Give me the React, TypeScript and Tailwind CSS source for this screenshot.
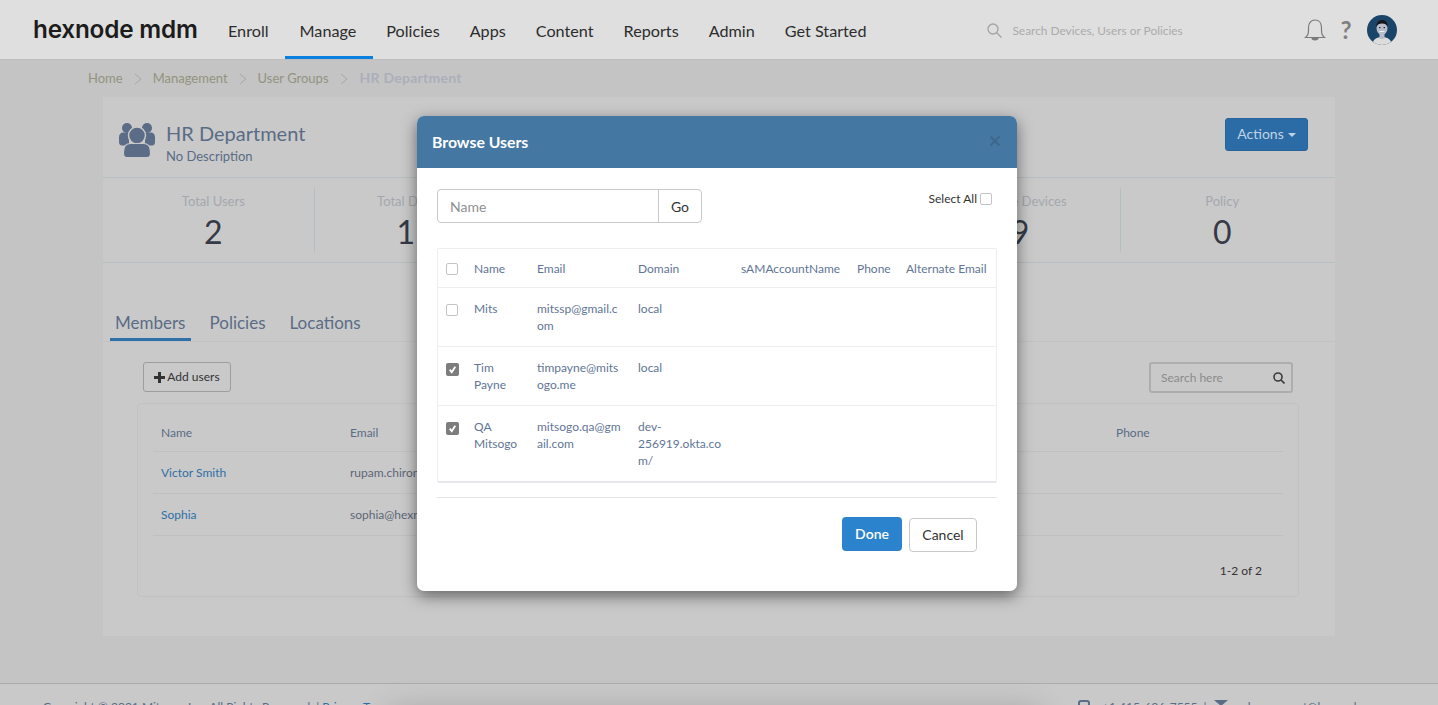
import React from "react";

const navItems = ["Enroll", "Manage", "Policies", "Apps", "Content", "Reports", "Admin", "Get Started"];
const stats = [
  ["Total Users", "2"],
  ["Total Devices", "11"],
  ["Enrolled Devices", "9"],
  ["Managed Devices", "9"],
  ["Inactive Devices", "9"],
  ["Policy", "0"],
];
const modalRows = [
  { name: "Mits", email: "mitssp@gmail.com", domain: "local", checked: false },
  { name: "Tim Payne", email: "timpayne@mitsogo.me", domain: "local", checked: true },
  { name: "QA Mitsogo", email: "mitsogo.qa@gmail.com", domain: "dev-256919.okta.com/", checked: true },
];

function Check({ checked = false }: { checked?: boolean }) {
  return checked ? (
    <span className="flex h-[13px] w-[13px] items-center justify-center rounded-[2px] bg-[#7d7d7d]">
      <svg viewBox="0 0 12 12" className="h-[11px] w-[11px]" fill="none" stroke="#ffffff" strokeWidth="2">
        <path d="M3 6.2 5.2 9 9 3" />
      </svg>
    </span>
  ) : (
    <span className="block h-[12px] w-[12px] rounded-[2px] border border-[#c4c4c4] bg-white" />
  );
}

function UsersIcon() {
  return (
    <svg width="38" height="36" viewBox="0 0 38 36" className="shrink-0">
      <g fill="#5a6c86">
        <circle cx="9" cy="6" r="5" />
        <circle cx="29" cy="6" r="5" />
        <path d="M1 15c0-3 2-4.500 4-4.500h6v13H4c-2 0-3-1.500-3-3.500z" />
        <path d="M37 15c0-3-2-4.500-4-4.500h-6v13h7c2 0 3-1.500 3-3.500z" />
      </g>
      <circle cx="19" cy="13.500" r="8.500" fill="#5a6c86" stroke="#c9c9c9" strokeWidth="1.500" />
      <path d="M5.500 30c0-6 3-8.500 7-8.500h13c4 0 7 2.500 7 8.500v2c0 2-1.500 3.500-3.500 3.500H9c-2 0-3.500-1.500-3.500-3.500z" fill="#5a6c86" stroke="#c9c9c9" strokeWidth="1.200" />
    </svg>
  );
}

function Avatar() {
  return (
    <svg width="30" height="30" viewBox="0 0 30 30" className="shrink-0">
      <clipPath id="av"><circle cx="15" cy="15" r="15" /></clipPath>
      <g clipPath="url(#av)">
        <rect width="30" height="30" fill="#1b4568" />
        <path d="M5 30c1-6 5-8 10-8s9 2 10 8z" fill="#dcdcdc" />
        <rect x="12.500" y="18" width="5" height="6" fill="#b9bcc9" />
        <ellipse cx="15" cy="13" rx="5.500" ry="7" fill="#b9bcc9" />
        <path d="M9.500 12c-.500-4 2-7 5.500-7s6 2.500 5.500 7c-1-2.500-2.500-3.500-5.500-3.500S10.500 9.500 9.500 12z" fill="#15171c" />
        <rect x="12" y="12" width="1.500" height="1.200" fill="#2b2b33" />
        <rect x="16.500" y="12" width="1.500" height="1.200" fill="#2b2b33" />
        <path d="M12.500 16.500h5" stroke="#f3f3f3" strokeWidth="1" />
      </g>
    </svg>
  );
}

function Chevron() {
  return (
    <svg width="8" height="12" viewBox="0 0 8 12" fill="none" stroke="#a8a8a0" strokeWidth="1" className="mx-[11px]">
      <path d="m1 1 6 5-6 5" />
    </svg>
  );
}

export default function App() {
  return (
    <div className="relative flex h-[705px] w-[1438px] flex-col overflow-hidden bg-[#c4c4c4] font-[Lato,sans-serif] text-[#333333]">
      {/* top bar */}
      <header className="flex h-[60px] shrink-0 items-stretch border-b border-[#bdbdbd] bg-[#dfdfdf]">
        <div className="flex w-[213px] shrink-0 items-center pl-[33px] font-[Inter,sans-serif] text-[24.300px] font-semibold tracking-[-0.2px] text-[#1c1c1c]">
          hexnode mdm
        </div>
        <nav className="flex items-stretch">
          {navItems.map((item) => (
            <div
              key={item}
              className={
                "flex items-center pt-[6px] text-[16.200px] text-[#2c2c2c] " +
                (item === "Manage"
                  ? "-mr-[2px] ml-[1px] border-b-[3px] border-[#0a7fe0] pl-[15px] pr-[17px]"
                  : "border-b-[3px] border-transparent px-[15px]")
              }
            >
              {item}
            </div>
          ))}
        </nav>
        <div className="ml-[106px] flex w-[300px] items-center gap-[10px] pt-[2px]">
          <svg width="15" height="15" viewBox="0 0 15 15" fill="none" stroke="#a3a3a3" strokeWidth="1.300">
            <circle cx="6" cy="6" r="5" />
            <path d="m9.700 9.700 4.800 4.800" />
          </svg>
          <input
            readOnly
            placeholder="Search Devices, Users or Policies"
            className="w-[220px] bg-transparent text-[11.900px] outline-none placeholder:text-[#ababab]"
          />
        </div>
        <div className="ml-[17px] flex items-center">
          <svg width="22" height="24" viewBox="0 0 22 24" fill="none" stroke="#7b7b7b" strokeWidth="1.200">
            <path d="M1.500 19.500c2-1.500 3-3 3-7V9.500C4.500 5 7 2 11 2s6.500 3 6.500 7.500v3c0 4 1 5.500 3 7z" />
            <path d="M8 20c0 2.500 6 2.500 6 0z" fill="#7b7b7b" />
          </svg>
          <span className="ml-[14px] text-[24px] font-bold leading-none text-[#7f7f7f]">?</span>
          <span className="ml-[15px]">
            <Avatar />
          </span>
        </div>
      </header>

      {/* main */}
      <main className="flex-1 px-[103px]">
        <div className="flex h-[37px] items-center text-[13px] text-[#93937f]">
          <div className="-ml-[15px] flex items-center">
            <span>Home</span>
            <Chevron />
            <span>Management</span>
            <Chevron />
            <span>User Groups</span>
            <Chevron />
            <span className="-mt-[2px] ml-[1px] text-[14px] font-bold tracking-[0.25px] text-[#abaebb]">HR Department</span>
          </div>
        </div>

        <section className="h-[539px] bg-[#c9c9c9]">
          <div className="flex h-[80px] items-start justify-between pl-[15px] pr-[25px]">
            <div className="flex pt-[25px]">
              <UsersIcon />
              <div className="ml-[10px] -mt-[2px]">
                <div className="text-[20px] leading-[26px] text-[#5a6c86]">HR Department</div>
                <div className="mt-[1px] text-[13px] leading-[18px] text-[#5a6c86]">No Description</div>
              </div>
            </div>
            <button className="mr-[2px] mt-[21px] flex h-[33px] w-[83px] items-center justify-center gap-[4px] rounded-[3px] border border-[#27649a] bg-[#2b6ca6] pb-[2px] text-[14px] text-[#c0d3e3]">
              Actions
              <span className="mt-[2px] block h-0 w-0 border-x-[4px] border-t-[4px] border-x-transparent border-t-[#c0d3e3]" />
            </button>
          </div>

          <div className="grid h-[86px] grid-cols-6 border-y border-[#b3bfc0] pb-[10px] pl-[10px] pr-[12px] pt-[10px]">
            {stats.map(([label, value], i) => (
              <div
                key={label}
                className={"flex flex-col items-center " + (i < 5 ? "border-r border-[#b3bfc4]" : "")}
              >
                <div className="text-[13px] leading-[26px] text-[#a4a8ae]">{label}</div>
                <div className="text-[32px] leading-[36px] text-[#343a46]">{value}</div>
              </div>
            ))}
          </div>

          <div className="mt-[45px] flex h-[34px] items-stretch border-b border-[#c2c2c2] pl-[7px] text-[17px] text-[#5a6c86]">
            <div className="h-[33px] border-b-[3px] border-[#2f70a9] pl-[5px] pr-[6px] pt-[2px]">Members</div>
            <div className="ml-[13px] px-[5px] pt-[2px]">Policies</div>
            <div className="ml-[14px] px-[5px] pt-[2px]">Locations</div>
          </div>

          <div className="mt-[20px] flex h-[31px] justify-between pl-[40px] pr-[40px]">
            <button className="flex h-[30px] w-[88px] items-center justify-center gap-[2px] rounded-[3px] border border-[#9d9d9d] text-[12px] text-[#333333]">
              <svg width="11" height="11" viewBox="0 0 11 11" fill="#333333">
                <path d="M4 0h3v4h4v3H7v4H4V7H0V4h4z" />
              </svg>
              Add users
            </button>
            <div className="mr-[2px] flex h-[31px] w-[144px] items-center justify-between rounded-[3px] border-2 border-[#adadad] pl-[10px] pr-[6px]">
              <input
                readOnly
                placeholder="Search here"
                className="w-[100px] bg-transparent text-[12px] outline-none placeholder:text-[#8b8b8b]"
              />
              <svg width="12" height="12" viewBox="0 0 12 12" fill="none" stroke="#3b3b3b" strokeWidth="1.600">
                <circle cx="5" cy="5" r="4" />
                <path d="m8 8 3.500 3.500" />
              </svg>
            </div>
          </div>

          <div className="ml-[34px] mt-[10px] h-[194px] w-[1162px] rounded-[4px] border border-[#c1c1c1] px-[15px] pt-[10px]">
            <table className="w-[1130px] table-fixed border-collapse text-left text-[12px]">
              <colgroup>
                <col className="w-[189px]" />
                <col className="w-[766px]" />
                <col />
              </colgroup>
              <tbody>
                <tr className="h-[37px] border-b border-[#c0c0c0] text-[#5a6c86]">
                  <td className="pl-[8px] pt-[2px]">Name</td>
                  <td className="pl-[8px] pt-[2px]">Email</td>
                  <td className="pl-[8px] pt-[2px]">Phone</td>
                </tr>
                <tr className="h-[42px] border-b border-[#c0c0c0]">
                  <td className="pl-[8px] pt-[2px] text-[#2f6fa7]">Victor Smith</td>
                  <td className="pl-[8px] pt-[2px] text-[#5c6675]">rupam.chiron@hexnode.com</td>
                  <td />
                </tr>
                <tr className="h-[42px] border-b border-[#c0c0c0]">
                  <td className="pl-[8px] pt-[2px] text-[#2f6fa7]">Sophia</td>
                  <td className="pl-[8px] pt-[2px] text-[#5c6675]">sophia@hexnode.com</td>
                  <td />
                </tr>
              </tbody>
            </table>
            <div className="mt-[26px] pr-[21px] text-right text-[12px] leading-[18px] text-[#333333]">1-2 of 2</div>
          </div>
        </section>
      </main>

      {/* footer */}
      <footer className="flex h-[22px] shrink-0 justify-between border-t border-[#ababab] bg-[#c9c9c9] pl-[43px] pr-[50px] pt-[15px] text-[12px] leading-[16px] text-[#5a6c86]">
        <div>
          Copyright © 2021 Mitsogo Inc. All Rights Reserved. | <span className="text-[#2f6fa7]">Privacy</span>{" "}
          <span className="text-[#2f6fa7]">Terms</span>
        </div>
        <div className="flex items-start gap-[6px]">
          <span className="-ml-[3px] mr-[3px] mt-[1px] block h-[12px] w-[12px] rounded-[3px] border-2 border-[#5a6c86]" />
          <span className="ml-[3px]">+1 415-636-7555</span>
          <span>|</span>
          <span className="ml-[1px] mt-[1px] block h-0 w-0 border-x-[7px] border-t-[6px] border-x-transparent border-t-[#5a6c86]" />
          <span className="ml-[3px]">sales-support@hexnode.com</span>
        </div>
      </footer>

      {/* element below the fold casting its shadow up over the footer */}
      <div className="absolute left-[400px] top-[722px] h-[40px] w-[630px] shadow-[0_0_32px_10px_rgba(0,0,0,0.22)]" />
      {/* sliver of the chat launcher at the window's corner */}
      <div className="absolute left-[1435px] top-[699px] h-[30px] w-[30px] rounded-full bg-[#1b4568]" />

      {/* modal */}
      <div className="absolute left-[417px] top-[116px] h-[475px] w-[600px] rounded-[7px] bg-white shadow-[0_5px_15px_rgba(0,0,0,0.5)]">
        <div className="flex h-[52px] items-center justify-between rounded-t-[7px] bg-[#4477a1] pl-[15px] pr-[17px]">
          <span className="text-[15.800px] font-bold text-white">Browse Users</span>
          <svg width="10" height="10" viewBox="0 0 10 10" stroke="#3c6686" strokeWidth="1.800" className="-mt-[2px]">
            <path d="m0.500 0.500 9 9M9.500 0.500l-9 9" />
          </svg>
        </div>

        <div className="px-[20px]">
          <div className="flex justify-between pt-[21px]">
            <div className="flex h-[34px] w-[265px] rounded-[4px] border border-[#c9c9c9]">
              <input
                readOnly
                placeholder="Name"
                className="w-[221px] border-r border-[#c9c9c9] bg-transparent pl-[12px] text-[14px] outline-none placeholder:text-[#8f8f8f]"
              />
              <span className="flex flex-1 items-center justify-center text-[14px] text-[#333333]">Go</span>
            </div>
            <div className="flex items-center gap-[3px] self-start pr-[5px] pt-[3px] text-[12px] leading-[14px] text-[#333333]">
              Select All <Check />
            </div>
          </div>

          <div className="mt-[25px] h-[235px] w-[560px] rounded-[2px] border-x border-t border-b-[2px] border-[#eceff2] border-b-[#e6e6ec]">
            <table className="w-[558px] table-fixed border-collapse text-left text-[12px] leading-[17px] text-[#5f7596]">
              <colgroup>
                <col className="w-[28px]" />
                <col className="w-[63px]" />
                <col className="w-[101px]" />
                <col className="w-[103px]" />
                <col className="w-[116px]" />
                <col className="w-[49px]" />
                <col />
              </colgroup>
              <tbody>
                <tr className="h-[38px] border-b border-[#eceff2]">
                  <td className="pl-[8px] pt-[2px]"><Check /></td>
                  <td className="pl-[8px] pt-[2px]">Name</td>
                  <td className="pl-[8px] pt-[2px]">Email</td>
                  <td className="pl-[8px] pt-[2px]">Domain</td>
                  <td className="pl-[8px] pt-[2px]">sAMAccountName</td>
                  <td className="pl-[8px] pt-[2px]">Phone</td>
                  <td className="whitespace-nowrap pl-[8px] pt-[2px]">Alternate Email</td>
                </tr>
                {modalRows.map((r) => (
                  <tr key={r.name} className="border-b border-[#eceff2] last:border-b-0">
                    <td className="pb-[12px] pl-[8px] pt-[16px] align-top"><Check checked={r.checked} /></td>
                    <td className="pb-[12px] pl-[8px] pr-[8px] pt-[12px] align-top">{r.name}</td>
                    <td className="break-all pb-[12px] pl-[8px] pr-[8px] pt-[12px] align-top">{r.email}</td>
                    <td className="pb-[12px] pl-[8px] pr-[8px] pt-[12px] align-top [overflow-wrap:anywhere]">{r.domain}</td>
                    <td />
                    <td />
                    <td />
                  </tr>
                ))}
              </tbody>
            </table>
          </div>

          <div className="mt-[14px] flex h-[54px] items-end justify-end gap-[7px] border-t border-[#e5e5e5] pr-[20px]">
            <button className="h-[34px] w-[60px] rounded-[4px] bg-[#2b83cd] pb-[1px] text-[14px] font-semibold text-white">Done</button>
            <button className="-mb-[1px] h-[34px] w-[68px] rounded-[4px] border border-[#c9c9c9] bg-white pb-[2px] text-[14px] text-[#333333]">Cancel</button>
          </div>
        </div>
      </div>
    </div>
  );
}
